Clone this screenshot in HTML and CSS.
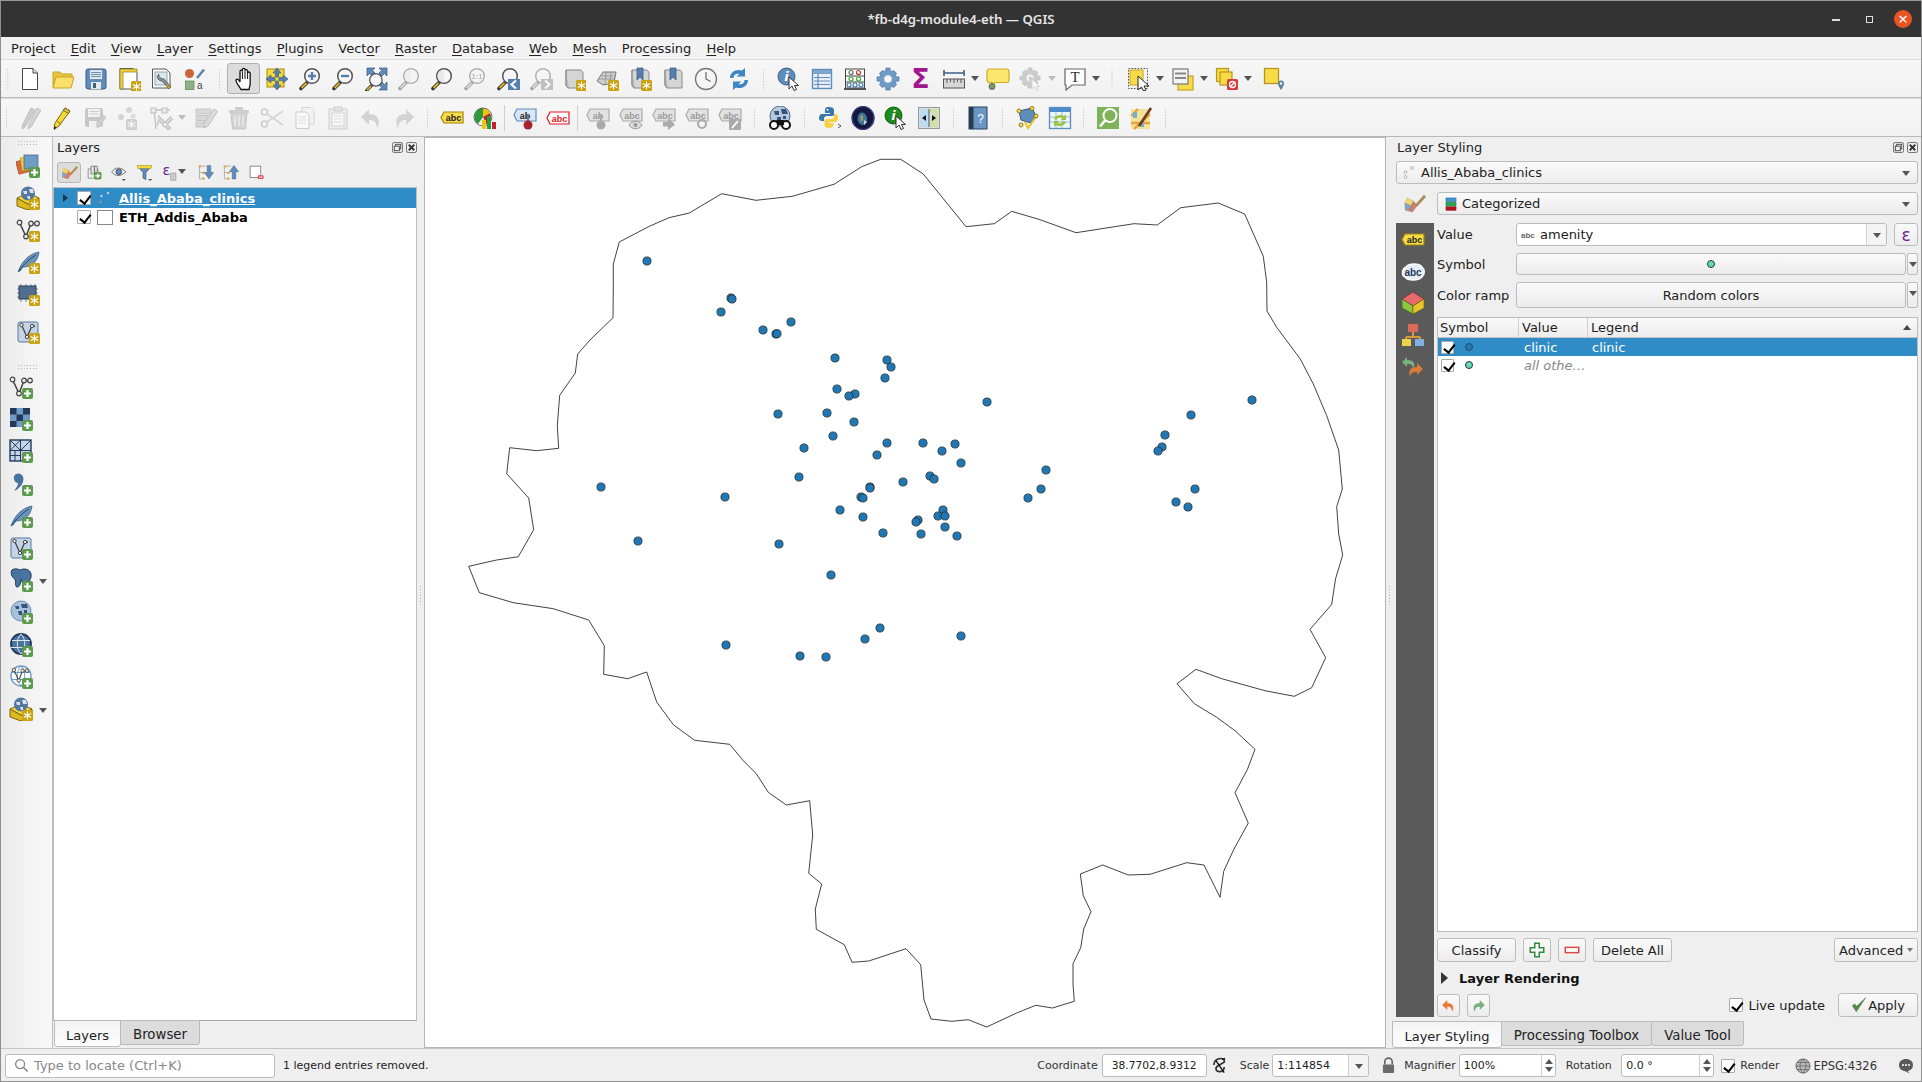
FILE: index.html
```html
<!DOCTYPE html>
<html lang="en">
<head>
<meta charset="utf-8">
<title>*fb-d4g-module4-eth — QGIS</title>
<link rel="stylesheet" href="styles.css">
</head>
<body>
<svg class="sprite" aria-hidden="true">
<defs>
<g id="bplus"><rect x="13" y="13" width="11" height="11" rx="2" fill="#5c9a4e"/><path d="M18.5 15v7M15 18.5h7" stroke="#fff" stroke-width="2.2"/></g>
<g id="bstar"><rect x="13" y="13" width="11" height="11" rx="1.5" fill="#c8a20f"/><path d="M18.5 14.5v8M14.8 16.5l7.4 4M14.8 20.5l7.4-4" stroke="#fff" stroke-width="1.2"/></g>
<g id="glass"><path d="M9 15.5 3 21.5" stroke="#333" stroke-width="3.6" stroke-linecap="round"/><path d="M8.5 16 3.5 21" stroke="#e0b52a" stroke-width="1.8"/><circle cx="14" cy="9" r="7.3" fill="#f6f6f6" stroke="#555" stroke-width="1.5"/></g>
<g id="vnode"><path d="M3.5 4.5 10 18.5 15 5.5H21" fill="none" stroke="#444" stroke-width="1.5"/><circle cx="3.5" cy="4.5" r="2.3" fill="#eee" stroke="#444" stroke-width="1.2"/><circle cx="10" cy="18.5" r="2.3" fill="#eee" stroke="#444" stroke-width="1.2"/><circle cx="15" cy="5.5" r="2.3" fill="#eee" stroke="#444" stroke-width="1.2"/><circle cx="21" cy="5.5" r="2.3" fill="#eee" stroke="#444" stroke-width="1.2"/></g>
<g id="feather"><path d="M2 22C5 13 12 4 23 2 22 11 16 17 7 17L4 21Z" fill="#6d93bd" stroke="#3b5f88" stroke-width=".8"/><path d="M3 21C8 14 13 9 20 5" stroke="#27496d" fill="none"/></g>
<g id="vbox"><rect x="2" y="2" width="20" height="20" rx="2" fill="#c4d4e6" stroke="#58789c"/><path d="M5.5 5 11 17 16 6H19" fill="none" stroke="#444" stroke-width="1.3"/><circle cx="5.5" cy="5" r="1.7" fill="#eee" stroke="#444"/><circle cx="11" cy="17" r="1.7" fill="#eee" stroke="#444"/><circle cx="16" cy="6" r="1.7" fill="#eee" stroke="#444"/></g>
<g id="gbox"><path d="M1 12 12 18 23 12V20L12 24 1 20Z" fill="#dcb91e" stroke="#7a6510"/><path d="M1 12 12 7 23 12 12 18Z" fill="#f0d43a" stroke="#7a6510"/><circle cx="12" cy="7.5" r="7" fill="#53779f"/><path d="M7 5h4v3H8zM13 3h4l1 4h-4zM11 10h3v3h-2z" fill="#d6e1ec"/></g>
<g id="globeL"><circle cx="12" cy="11" r="10" fill="#a9c1da" stroke="#6d8fb3"/><path d="M6 6h4v3H7zM12 4h6l1 4h-6zM9 11h4v4h-3zM15 10h3v3h-3z" fill="#34567c"/></g>
<g id="scroll"><path d="M4 3H18C20 3 21 5 21 7V21H7C5 21 4 19 4 17Z" fill="#d5d5d5" stroke="#888"/><path d="M4 3V17C4 19 5 21 7 21" fill="#bbb" stroke="#888"/></g>
<g id="bookm"><path d="M9 1H15V13L12 10 9 13Z" fill="#5580ad" stroke="#37587c" stroke-width=".7"/></g>

<symbol id="i-new" viewBox="0 0 24 24"><path d="M4.5 1.5H15L19.5 6V22.5H4.5Z" fill="#fff" stroke="#444"/><path d="M15 1.5V6H19.5" fill="#ddd" stroke="#444"/></symbol>
<symbol id="i-open" viewBox="0 0 24 24"><path d="M2 20V5H9L11 7H21V10" fill="#e8c53c" stroke="#c7a325"/><path d="M2 21 5 10H23L20 21Z" fill="#fbe06b" stroke="#c7a325"/></symbol>
<symbol id="i-save" viewBox="0 0 24 24"><rect x="2" y="2" width="20" height="20" rx="2" fill="#5f8dbb" stroke="#3d5f85"/><rect x="6" y="3" width="12" height="9" fill="#dfe7ef"/><path d="M7 5.5H17M7 7.5H17M7 9.5H17" stroke="#7a8fa6"/><rect x="7" y="15" width="10" height="7" fill="#e8e8e8"/><rect x="9" y="16" width="3" height="5" fill="#3d5f85"/></symbol>
<symbol id="i-layout" viewBox="0 0 24 24"><path d="M3 1.5H16L20 5.5V22H3Z" fill="#fff" stroke="#555"/><path d="M3 2H20V5H6V22H3Z" fill="#f3cf3e" stroke="#8d7a1f" stroke-width=".7"/><use href="#bstar" transform="translate(1 1)"/></symbol>
<symbol id="i-lmgr" viewBox="0 0 24 24"><path d="M2.5 2H16L20 6V21H2.5Z" fill="#fff" stroke="#555"/><rect x="5" y="5" width="12" height="13" fill="#dbe6f1" stroke="#8aa"/><path d="M9 7 C8 10 11 12 14 12L21 20 19 22 12 14C9 14 6 11 8 8Z" fill="#8e8e8e" stroke="#444" stroke-width=".7"/><path d="M17 18l3 3" stroke="#c8a20f" stroke-width="2.2"/></symbol>
<symbol id="i-style" viewBox="0 0 24 24"><circle cx="6.5" cy="6.5" r="4.5" fill="#c9633a"/><path d="M14 11 21 2.5" stroke="#5c86b0" stroke-width="2.6"/><rect x="2.5" y="14" width="8.5" height="8.5" fill="#8cb184" stroke="#5c8055" stroke-width=".7"/><text x="14" y="22" class="svgt" font-size="10" fill="#444">a</text></symbol>
<symbol id="i-hand" viewBox="0 0 24 24"><path d="M8 22.5C6 19 2.5 15 3 13 4 11.5 6 12.5 7 15V4.5C7 2.7 9.4 2.7 9.4 4.5V2.8C9.4 1 12 1 12 2.8V3.6C12 2 14.6 2.2 14.6 4V6C14.6 4.5 17.2 4.7 17.2 6.5V15.5C17.2 18.5 16.4 20.5 16 22.5Z" fill="#fff" stroke="#111" stroke-width="1.3"/><path d="M9.4 4.5V12M12 3.6V12M14.6 6V12" stroke="#111" fill="none"/></symbol>
<symbol id="i-pansel" viewBox="0 0 24 24"><rect x="2" y="2" width="17" height="18" fill="#f4d93c" stroke="#a68b12"/><path d="M12 1 16 6H13.5V10H10.5V6H8ZM12 23 8 18H10.5V14H13.5V18H16ZM1 12 6 8V10.5H10V13.5H6V16ZM23 12 18 16V13.5H14V10.5H18V8Z" fill="#5580ad" stroke="#37587c" stroke-width=".6"/></symbol>
<symbol id="i-zin" viewBox="0 0 24 24"><use href="#glass"/><path d="M14 5V13M10 9H18" stroke="#5580ad" stroke-width="2.4"/></symbol>
<symbol id="i-zout" viewBox="0 0 24 24"><use href="#glass"/><path d="M10 9H18" stroke="#5580ad" stroke-width="2.4"/></symbol>
<symbol id="i-zfull" viewBox="0 0 24 24"><path d="M3 1H11L8.5 3.5 11 6 8 9 5.5 6.5 3 9ZM23 1V9L20.5 6.5 18 9 15 6 17.5 3.5 15 1ZM23 23H15L17.5 20.5 15 18 18 15 20.5 17.5 23 15Z" fill="#5f8dbb" stroke="#37587c" stroke-width=".7"/><use href="#glass" transform="translate(0 1) scale(.85) translate(0 5)"/></symbol>
<symbol id="i-zsel" viewBox="0 0 24 24"><use href="#glass"/><path d="M14 2.5a6.5 6.5 0 0 0 0 13Z" fill="#e8e8e8"/></symbol>
<symbol id="i-z11" viewBox="0 0 24 24"><use href="#glass"/><text x="14" y="12" text-anchor="middle" class="svgt" font-size="7.5" font-weight="700" fill="#666">1:1</text></symbol>
<symbol id="i-zlast" viewBox="0 0 24 24"><use href="#glass"/><rect x="12" y="12" width="12" height="11" fill="#5580ad"/><path d="M20 13.5 15.5 17.5 20 21.5" fill="none" stroke="#fff" stroke-width="2.2"/></symbol>
<symbol id="i-znext" viewBox="0 0 24 24"><use href="#glass"/><rect x="12" y="12" width="12" height="11" fill="#5580ad"/><path d="M16 13.5 20.5 17.5 16 21.5" fill="none" stroke="#fff" stroke-width="2.2"/></symbol>
<symbol id="i-newmap" viewBox="0 0 24 24"><use href="#scroll"/><use href="#bstar" transform="translate(1 0)"/></symbol>
<symbol id="i-3d" viewBox="0 0 24 24"><path d="M2 14 8 5H21L19 16 8 18Z" fill="#cfcfcf" stroke="#777"/><path d="M6 9 20 9M4 12 20 12M11 5 10 18M16 5 15 17" stroke="#888" stroke-width=".7"/><use href="#bstar"/></symbol>
<symbol id="i-newbk" viewBox="0 0 24 24"><use href="#scroll"/><use href="#bookm"/><use href="#bstar"/></symbol>
<symbol id="i-bk" viewBox="0 0 24 24"><use href="#scroll"/><use href="#bookm"/></symbol>
<symbol id="i-clock" viewBox="0 0 24 24"><circle cx="12" cy="12" r="10.5" fill="#f5f5f5" stroke="#777" stroke-width="1.3"/><path d="M12 5V12L16.5 14.5" stroke="#666" stroke-width="1.2" fill="none"/></symbol>
<symbol id="i-refresh" viewBox="0 0 24 24"><path d="M3 11C3 5 9 1.5 15 3.5L18 1V9.5H9.5L12.5 7C9 6 6.5 8 6.5 11Z" fill="#3f86c6"/><path d="M21 13C21 19 15 22.5 9 20.5L6 23V14.5H14.5L11.5 17C15 18 17.5 16 17.5 13Z" fill="#3f86c6"/></symbol>
<symbol id="i-ident" viewBox="0 0 24 24"><circle cx="9.5" cy="9.5" r="8.5" fill="#5f8dbb" stroke="#3d5f85"/><text x="9.5" y="14" text-anchor="middle" class="svgs" font-size="13" font-style="italic" font-weight="700" fill="#fff">i</text><path d="M12 10V22L15 19 17 23.5 19.5 22.5 17.5 18.5H21.5Z" fill="#fff" stroke="#333"/></symbol>
<symbol id="i-table" viewBox="0 0 24 24"><rect x="2.5" y="2.5" width="19" height="19" fill="#e8eff7" stroke="#5f8dbb" stroke-width="1.4"/><rect x="3" y="3" width="18" height="4" fill="#7ba5cf"/><path d="M8 7V21M4 10.5H20M4 14H20M4 17.5H20" stroke="#5f8dbb" stroke-width="1.2"/></symbol>
<symbol id="i-abacus" viewBox="0 0 24 24"><rect x="2.5" y="2" width="19" height="19" fill="#fff" stroke="#444"/><path d="M2 9H22M2 15H22" stroke="#444"/><rect x="1" y="21" width="22" height="2" fill="#555"/><g fill="none" stroke-width="1.2"><circle cx="8" cy="5.5" r="2" stroke="#666"/><circle cx="15.5" cy="5.5" r="2" stroke="#b33"/><circle cx="8" cy="12" r="2" stroke="#3a3"/><circle cx="15.5" cy="12" r="2" stroke="#3a3"/><circle cx="6" cy="18" r="2" stroke="#47a"/><circle cx="12" cy="18" r="2" stroke="#47a"/><circle cx="18" cy="18" r="2" stroke="#47a"/></g></symbol>
<symbol id="i-gear" viewBox="0 0 24 24"><path d="M10 1H14L14.6 5 17.7 3.5 20.5 6.3 19 9.4 23 10V14L19 14.6 20.5 17.7 17.7 20.5 14.6 19 14 23H10L9.4 19 6.3 20.5 3.5 17.7 5 14.6 1 14V10L5 9.4 3.5 6.3 6.3 3.5 9.4 5Z" fill="#6f9bc7" stroke="#4e78a3" stroke-width=".7"/><circle cx="12" cy="12" r="3.8" fill="#f5f5f5"/></symbol>
<symbol id="i-measure" viewBox="0 0 24 24"><path d="M2 6H22M2 3V9M22 3V9" stroke="#3d5f85" stroke-width="1.6"/><rect x="1.5" y="12" width="21" height="9" fill="#d6d6d6" stroke="#555"/><path d="M5 12V16M8.5 12V15M12 12V16M15.5 12V15M19 12V16" stroke="#555"/></symbol>
<symbol id="i-tip" viewBox="0 0 24 24"><path d="M3.5 2H20.5C22 2 23 3 23 4.5V13C23 14.5 22 15.5 20.5 15.5H9L6 19V15.5H3.5C2 15.5 1 14.5 1 13V4.5C1 3 2 2 3.5 2Z" fill="#fde66f" stroke="#d1ae26" stroke-width="1.2"/><circle cx="6" cy="19.5" r="3" fill="#7a9a6a" stroke="#566f49"/></symbol>
<symbol id="i-gearg" viewBox="0 0 24 24"><use href="#i-gear" width="22" height="22"/><path d="M10 9 16 12 10 15Z" fill="#999"/><path d="M13 12V22L15.5 20 17.5 23.5 19 22.5 17.5 19.5H20.5Z" fill="#fff" stroke="#aaa"/></symbol>
<symbol id="i-textann" viewBox="0 0 24 24"><path d="M2 2H22V18H9L3 23V18H2Z" fill="#fff" stroke="#666" stroke-width="1.2"/><text x="12" y="15" text-anchor="middle" class="svgr" font-size="15" fill="#333">T</text></symbol>
<symbol id="i-select" viewBox="0 0 24 24"><rect x="1.5" y="1.5" width="19" height="20" fill="none" stroke="#555" stroke-dasharray="1.6 1.4"/><rect x="3" y="3" width="13" height="15" fill="#f7dc47" stroke="#c7a325"/><path d="M11 9V23L14.5 20 16.5 24 19 23 17 19H22Z" fill="#fff" stroke="#222"/></symbol>
<symbol id="i-form" viewBox="0 0 24 24"><rect x="7" y="9" width="15" height="14" fill="#f7dc47" stroke="#c7a325" stroke-width="1.2"/><rect x="2" y="2" width="15" height="15" fill="#f4f4f4" stroke="#777" stroke-width="1.2"/><path d="M4 6.5H15M4 11H15" stroke="#888" stroke-width="2.2"/></symbol>
<symbol id="i-desel" viewBox="0 0 24 24"><rect x="1.5" y="1.5" width="12" height="13" fill="#f7dc47" stroke="#b8961c" stroke-width="1.2"/><rect x="5" y="5" width="12" height="13" fill="#f7dc47" stroke="#b8961c" stroke-width="1.2"/><rect x="12" y="12" width="11" height="11" rx="1.5" fill="#d73a3a"/><circle cx="17.5" cy="17.5" r="3" fill="none" stroke="#fff" stroke-width="1.3"/><path d="M15.5 19.5l4-4" stroke="#fff" stroke-width="1.3"/></symbol>
<symbol id="i-pin" viewBox="0 0 24 24"><rect x="1.5" y="1.5" width="14" height="15" fill="#f7dc47" stroke="#b8961c" stroke-width="1.3"/><path d="M18 23C15.5 19 15 18 15 16.5A3 3 0 0 1 21 16.5C21 18 20.5 19 18 23Z" fill="#5f7fa0"/><circle cx="18" cy="16.5" r="1.2" fill="#fff"/></symbol>

<symbol id="i-toggle" viewBox="0 0 24 24"><path d="M8 21 5 23 5.5 19 14 2 18 4Z" fill="#999" stroke="#777"/><path d="M14 21 11 23 11.5 19 20 2 24 4Z" fill="#aaa" stroke="#777"/></symbol>
<symbol id="i-pencil" viewBox="0 0 24 24"><path d="M9 20 4 23.5 4.7 17.5 15 2 20 5Z" fill="#f4d93c" stroke="#7a6510"/><path d="M15 2 20 5 18.5 7.5 13.4 4.4Z" fill="#d9c35a" stroke="#7a6510"/><path d="M7.5 15.5 11 18" stroke="#7a6510"/><path d="M4.4 20 6.5 21.6 4 23.5Z" fill="#222"/></symbol>
<symbol id="i-saveed" viewBox="0 0 24 24"><rect x="2" y="2" width="18" height="19" rx="2" fill="#8a8a8a"/><rect x="5" y="3" width="12" height="8" fill="#eee"/><path d="M6 5.5H16M6 8H16" stroke="#999"/><rect x="6" y="15" width="8" height="6" fill="#eee"/><path d="M14 22 13.5 17 20 9 23 11 17 20Z" fill="#999" stroke="#777" stroke-width=".6"/></symbol>
<symbol id="i-addpts" viewBox="0 0 24 24"><circle cx="5" cy="11" r="3" fill="#aaa"/><circle cx="13" cy="4" r="3" fill="#aaa"/><circle cx="17" cy="10" r="2.6" fill="#bbb"/><use href="#bstar" transform="translate(-3 0)"/></symbol>
<symbol id="i-vertex" viewBox="0 0 24 24"><path d="M4 4H21M5 4 7 23" stroke="#777" fill="none" stroke-width="1.3"/><rect x="2" y="2" width="5" height="5" fill="#ddd" stroke="#777"/><rect x="13" y="2" width="5" height="5" fill="#ddd" stroke="#777"/><path d="M9 9 22 22 19 24 10 15 8 20 M22 10 13 19 16 21 24 13" fill="#aaa" stroke="#777"/></symbol>
<symbol id="i-modify" viewBox="0 0 24 24"><path d="M2 3H17V8H2ZM2 9.5H14V14.5H2ZM2 16H12V21H2Z" fill="#b0b0b0" stroke="#888"/><path d="M10 22 10 17 20 3 23.5 5.5 14 20Z" fill="#bbb" stroke="#777"/></symbol>
<symbol id="i-trash" viewBox="0 0 24 24"><path d="M4 7H20L18.5 23H5.5Z" fill="#aaa" stroke="#888"/><path d="M2 4H22V7H2ZM8 1H16V4H8Z" fill="#999"/><path d="M8 10V20M12 10V20M16 10V20" stroke="#eee" stroke-width="1.2"/></symbol>
<symbol id="i-cut" viewBox="0 0 24 24"><circle cx="4.5" cy="6" r="3" fill="none" stroke="#999" stroke-width="1.6"/><circle cx="4.5" cy="18" r="3" fill="none" stroke="#999" stroke-width="1.6"/><path d="M7 8 23 19M7 16 23 5" stroke="#aaa" stroke-width="1.8"/></symbol>
<symbol id="i-copy" viewBox="0 0 24 24"><path d="M9 1.5H18L21 4.5V18H9Z" fill="#f2f2f2" stroke="#aaa"/><path d="M3 6H13L16 9V22.5H3Z" fill="#fff" stroke="#999"/><path d="M5.5 11H13M5.5 14H13M5.5 17H13" stroke="#bbb"/></symbol>
<symbol id="i-paste" viewBox="0 0 24 24"><rect x="3" y="3" width="18" height="20" fill="#e4e4e4" stroke="#999"/><rect x="8" y="1" width="8" height="4" fill="#ccc" stroke="#999"/><rect x="6" y="7" width="12" height="13" fill="#fff" stroke="#aaa"/><path d="M8 10H16M8 13H16M8 16H16" stroke="#bbb"/></symbol>
<symbol id="i-undo" viewBox="0 0 24 24"><path d="M10 3 2 11 10 19V14C15 14 17 16 18 22 22 14 19 8 10 8Z" fill="#a8a8a8"/></symbol>
<symbol id="i-redo" viewBox="0 0 24 24"><path d="M14 3 22 11 14 19V14C9 14 7 16 6 22 2 14 5 8 14 8Z" fill="#a8a8a8"/></symbol>
<symbol id="i-abc" viewBox="0 0 24 24"><path d="M4 6H23V17H4L1 11.5Z" fill="#f7dc47" stroke="#a08410" stroke-width="1.2"/><text x="13.5" y="15" text-anchor="middle" class="svgt" font-size="9" font-weight="700" fill="#222">abc</text></symbol>
<symbol id="i-chart" viewBox="0 0 24 24"><path d="M10 2A9 9 0 0 0 5 18L10 11Z" fill="#2d9a3a"/><path d="M10 2A9 9 0 0 1 17 7L10 11Z" fill="#f1c40f"/><path d="M17 7A9 9 0 0 1 14 19L10 11Z" fill="#c0212a"/><circle cx="10" cy="11" r="9" fill="none" stroke="#333" stroke-width=".7"/><rect x="9" y="14" width="4" height="9" fill="#f1c40f"/><rect x="14" y="10" width="4" height="13" fill="#2d9a3a"/><rect x="19" y="16" width="4" height="7" fill="#c0212a"/></symbol>
<symbol id="i-abcblue" viewBox="0 0 24 24"><path d="M4 3H23V15H4L1 9Z" fill="#d8e6f6" stroke="#5f8dbb" stroke-width="1.2"/><text x="12" y="12.5" text-anchor="middle" class="svgt" font-size="9" font-weight="700" fill="#222">ab</text><path d="M15 8V15" stroke="#777" stroke-width="2"/><circle cx="15" cy="19" r="4.5" fill="#a8232e"/></symbol>
<symbol id="i-abcred" viewBox="0 0 24 24"><path d="M4 6H23V18H4L1 12Z" fill="#fff" stroke="#e01b24" stroke-width="1.2"/><text x="13.5" y="15.5" text-anchor="middle" class="svgt" font-size="9" font-weight="700" fill="#e01b24">abc</text></symbol>
<symbol id="i-abcpin" viewBox="0 0 24 24"><path d="M4 3H23V15H4L1 9Z" fill="#e2e2e2" stroke="#aaa" stroke-width="1.2"/><text x="12" y="12.5" text-anchor="middle" class="svgt" font-size="9" font-weight="700" fill="#999">ab</text><path d="M15 8V15" stroke="#aaa" stroke-width="2"/><circle cx="15" cy="19" r="4.5" fill="#aaa"/></symbol>
<symbol id="i-abceye" viewBox="0 0 24 24"><path d="M4 3H23V15H4L1 9Z" fill="#e2e2e2" stroke="#aaa" stroke-width="1.2"/><text x="13" y="12.5" text-anchor="middle" class="svgt" font-size="9" font-weight="700" fill="#999">abc</text><path d="M10 19C13 14 20 14 23 19 20 24 13 24 10 19Z" fill="#ddd" stroke="#999"/><circle cx="16.5" cy="19" r="2" fill="#999"/></symbol>
<symbol id="i-abcmove" viewBox="0 0 24 24"><path d="M4 3H23V15H4L1 9Z" fill="#e2e2e2" stroke="#aaa" stroke-width="1.2"/><text x="13" y="12.5" text-anchor="middle" class="svgt" font-size="9" font-weight="700" fill="#999">abc</text><path d="M11 16H16V12L23 18.5 16 24V20.5H11Z" fill="#aaa"/></symbol>
<symbol id="i-abcrot" viewBox="0 0 24 24"><path d="M4 3H23V15H4L1 9Z" fill="#e2e2e2" stroke="#aaa" stroke-width="1.2"/><text x="13" y="12.5" text-anchor="middle" class="svgt" font-size="9" font-weight="700" fill="#999">abc</text><circle cx="17" cy="18" r="4" fill="none" stroke="#aaa" stroke-width="2"/></symbol>
<symbol id="i-abcedit" viewBox="0 0 24 24"><path d="M4 3H23V15H4L1 9Z" fill="#e2e2e2" stroke="#aaa" stroke-width="1.2"/><text x="13" y="12.5" text-anchor="middle" class="svgt" font-size="9" font-weight="700" fill="#999">abc</text><rect x="11" y="13" width="12" height="11" rx="1" fill="#aaa"/><path d="M14 22 20 15" stroke="#fff" stroke-width="1.8"/></symbol>
<symbol id="i-binoc" viewBox="0 0 24 24"><circle cx="12" cy="10" r="10" fill="#b8c9dc" stroke="#48698f"/><path d="M6 5h5v4H7zM13 3h5l2 5h-6zM9 11h4v4H9zM15 10h3v3h-3z" fill="#34567c"/><circle cx="6" cy="19" r="4" fill="#fff" stroke="#111" stroke-width="2"/><circle cx="18" cy="19" r="4" fill="#fff" stroke="#111" stroke-width="2"/><path d="M8 14H16V19H10Z" fill="#111"/></symbol>
<symbol id="i-python" viewBox="0 0 24 24"><path d="M11 1C7 1 7 3 7 5V7H12V8H4C2 8 1 10 1 12S2 15 4 15H6V13C6 11 7 10 9 10H14C15.5 10 16 9 16 8V4C16 2 14 1 11 1Z" fill="#3a76a8"/><circle cx="9.5" cy="3.7" r="1" fill="#fff"/><path d="M16 8V10C16 12 15 13 13 13H8C7 13 6.5 14 6.5 15V19C6.5 21 8.5 22 11 22S15.5 21 15.5 19V17H11V16H17C19 16 20 14 20 12S19 8 17 8Z" fill="#f7cf45"/><path d="M20 18 23 20 20 22" fill="none" stroke="#555"/></symbol>
<symbol id="i-earth" viewBox="0 0 24 24"><ellipse cx="12" cy="12" rx="11" ry="11.5" fill="#14183e" stroke="#34407e" stroke-width="1.4"/><path d="M8 8C11 5 15 7 16 12 17 17 13 21 9 18 7 16 5 13 8 8Z" fill="#3e7699"/><path d="M9 10 12 9 12 14 10 16Z" fill="#a99761"/><path d="M13 14 16 16 13 19Z" fill="#c9d4dc"/></symbol>
<symbol id="i-identg" viewBox="0 0 24 24"><circle cx="9.5" cy="9.5" r="8.5" fill="#1c8a1c" stroke="#0d5f0d"/><text x="9.5" y="14" text-anchor="middle" class="svgs" font-size="13" font-style="italic" font-weight="700" fill="#fff">i</text><path d="M12 10V22L15 19 17 23.5 19.5 22.5 17.5 18.5H21.5Z" fill="#fff" stroke="#333"/></symbol>
<symbol id="i-swipe" viewBox="0 0 24 24"><rect x="1.5" y="1.5" width="21" height="21" fill="#ddd" stroke="#999"/><rect x="3" y="3" width="9" height="18" fill="#bcdcf2"/><path d="M12 3H21V21H12V16L17 8 12 6Z" fill="#cde0a8"/><path d="M12 3V21" stroke="#555"/><path d="M5 12 9 9V15ZM19 12 15 9V15Z" fill="#111"/></symbol>
<symbol id="i-help" viewBox="0 0 24 24"><rect x="3" y="1" width="18" height="22" fill="#6b96c4" stroke="#27415e"/><rect x="3" y="1" width="4.5" height="22" fill="#293b4e"/><text x="14.5" y="17" text-anchor="middle" class="svgt" font-size="12" fill="#fff">?</text></symbol>
<symbol id="i-dig" viewBox="0 0 24 24"><path d="M4 5 17 2 21 10 16 17 6 14Z" fill="#5f8dbb" stroke="#37587c"/><path d="M10 16 13 22 21 11" stroke="#e6c52a" stroke-width="2" fill="none"/><g fill="#f7dc47" stroke="#7a6510" stroke-width=".8"><circle cx="4" cy="5" r="2"/><circle cx="17" cy="2.4" r="2"/><circle cx="21" cy="10" r="2"/><circle cx="6" cy="19" r="2"/></g></symbol>
<symbol id="i-tabref" viewBox="0 0 24 24"><rect x="1.5" y="1.5" width="21" height="21" fill="#eef5fb" stroke="#5f8dbb" stroke-width="1.3"/><rect x="2" y="2" width="20" height="4" fill="#4a8cc9"/><path d="M8 6V22M14 6V22M2 11H22M2 16H22" stroke="#9cc0e0"/><path d="M6 13C7 9 13 8 16 10L18 8.5V14H12.5L14.5 12.3C12.5 11 9.5 11.5 8.7 14ZM18 16C17 20 11 21 8 19L6 20.5V15H11.5L9.5 16.7C11.5 18 14.5 17.5 15.3 15Z" fill="#9bc53d"/></symbol>
<symbol id="i-gsearch" viewBox="0 0 24 24"><rect x="1" y="1" width="22" height="22" fill="#7fb35a"/><circle cx="14" cy="9.5" r="6.5" fill="none" stroke="#fff" stroke-width="2"/><path d="M9.5 14 4 20.5" stroke="#fff" stroke-width="2.6"/></symbol>
<symbol id="i-mapedit" viewBox="0 0 24 24"><rect x="2" y="3" width="19" height="20" fill="#f2e29a"/><path d="M2 10 9 3M5 23 21 8M2 17H21" stroke="#e6a43b" stroke-width="2.4"/><path d="M4 6H8V12H4ZM11 15H15V21H11Z" fill="#74b0d6"/><path d="M10 20 22 2" stroke="#6a3b1f" stroke-width="2.6"/></symbol>

<symbol id="i-dsm" viewBox="0 0 24 24"><rect x="1" y="6" width="13" height="13" transform="rotate(-15 7 12)" fill="#d7693a" stroke="#9a4422" stroke-width=".6"/><rect x="5" y="3" width="13" height="13" transform="rotate(-8 11 9)" fill="#f3cf3e" stroke="#a68b12" stroke-width=".6"/><rect x="8" y="1" width="14" height="14" fill="#6f9bc7" stroke="#3d5f85" stroke-width=".7"/><use href="#bplus"/></symbol>
<symbol id="i-gpkg" viewBox="0 0 24 24"><use href="#gbox"/><use href="#bstar"/></symbol>
<symbol id="i-vstar" viewBox="0 0 24 24"><use href="#vnode"/><use href="#bstar"/></symbol>
<symbol id="i-fstar" viewBox="0 0 24 24"><use href="#feather"/><use href="#bstar"/></symbol>
<symbol id="i-chip" viewBox="0 0 24 24"><path d="M1 7H22M1 11H22M1 15H22M5 2V20M10 2V20M15 2V20M19 2V20" stroke="#888"/><rect x="3" y="4" width="17" height="13" fill="#4f6d8f" stroke="#2c4158"/><use href="#bstar"/></symbol>
<symbol id="i-vboxs" viewBox="0 0 24 24"><use href="#vbox"/><use href="#bstar"/></symbol>
<symbol id="i-vplus" viewBox="0 0 24 24"><use href="#vnode"/><use href="#bplus"/></symbol>
<symbol id="i-rplus" viewBox="0 0 24 24"><path d="M1 1H21V20H1Z" fill="#6f9bc7"/><path d="M1 1H7.5V7.5H1ZM14 1H21V7.5H14ZM7.5 7.5H14V14H7.5ZM1 14H7.5V20H1Z" fill="#22395a"/><use href="#bplus"/></symbol>
<symbol id="i-mplus" viewBox="0 0 24 24"><rect x="1" y="1" width="21" height="21" fill="#c4d4e6" stroke="#22395a" stroke-width="1.4"/><path d="M1 11.5H22M11.5 1V22M1 1 11.5 11.5M1 11.5 11.5 1M22 1 11.5 11.5M1 16.5H11.5M6 11.5V22" stroke="#22395a"/><use href="#bplus"/></symbol>
<symbol id="i-cplus" viewBox="0 0 24 24"><path d="M7 2C12 0 16 4 14 10 12 15 8 18 5 19 8 15 9 13 9 11 5 11 3 4 7 2Z" fill="#4a74a0"/><use href="#bplus"/></symbol>
<symbol id="i-fplus" viewBox="0 0 24 24"><use href="#feather"/><use href="#bplus"/></symbol>
<symbol id="i-vbplus" viewBox="0 0 24 24"><use href="#vbox"/><use href="#bplus"/></symbol>
<symbol id="i-pg" viewBox="0 0 24 24"><path d="M3 2C6 0 9 1 11 2 15 0 21 1 22 6 23 10 20 13 19 15 18 18 16 18 14 16 13 15 13 12 12 11 12 15 11 19 8 19 6 19 7 14 6 11 3 10 1 4 3 2Z" fill="#4a74a0" stroke="#22395a"/><use href="#bplus"/></symbol>
<symbol id="i-wms" viewBox="0 0 24 24"><use href="#globeL"/><use href="#bplus"/></symbol>
<symbol id="i-wcs" viewBox="0 0 24 24"><circle cx="12" cy="11" r="10" fill="#4a74a0" stroke="#22395a" stroke-width="1.8"/><path d="M3 7.5H21M2 14.5H22M12 1C7 6 7 16 12 21M12 1C17 6 17 16 12 21" stroke="#dde6f0" fill="none"/><use href="#bplus"/></symbol>
<symbol id="i-wfs" viewBox="0 0 24 24"><circle cx="12" cy="11" r="10" fill="#fff" stroke="#6f9bc7" stroke-width="1.4"/><path d="M3 7.5H21M2 14.5H22M12 1C7 6 7 16 12 21M12 1C17 6 17 16 12 21" stroke="#6f9bc7" fill="none"/><use href="#vnode" transform="scale(.75) translate(3 2)"/><use href="#bplus"/></symbol>

<symbol id="i-brush" viewBox="0 0 24 24"><path d="M13 15 23 4" stroke="#b98a4a" stroke-width="3"/><path d="M4 6 11 9 15 14 10 21 2 19Z" fill="#d97a63"/><path d="M4 6 11 9 8 14 1.5 11Z" fill="#f0d84a"/><path d="M1.5 11 8 14 6 19 2 18Z" fill="#7ba5cf"/></symbol>
<symbol id="i-group" viewBox="0 0 24 24"><path d="M3 7V20H17V7Z" fill="#eee" stroke="#777"/><path d="M7 3H12V14H7ZM12 3H16V14H12Z" fill="#ddd" stroke="#666"/><use href="#bplus" transform="translate(-1 -1) scale(.95)"/></symbol>
<symbol id="i-eye" viewBox="0 0 24 24"><path d="M1 11C6 4 14 4 21 11 14 18 6 18 1 11Z" fill="#eee" stroke="#666" stroke-width="1.2"/><circle cx="11" cy="11" r="4" fill="#5f8dbb" stroke="#333"/><path d="M15 21H21L18 24Z" fill="#555"/></symbol>
<symbol id="i-filter" viewBox="0 0 24 24"><path d="M2 3H22L14 12V22L10 20V12Z" fill="#5f8dbb" stroke="#37587c"/><rect x="2" y="2" width="20" height="4" fill="#f4d93c" stroke="#a68b12" stroke-width=".6"/><path d="M17 21H23L20 24Z" fill="#555"/></symbol>
<symbol id="i-expr" viewBox="0 0 24 24"><text x="2" y="15" class="svgs" font-size="20" fill="#6e2b87">ε</text><path d="M13 13H21V23H14Z" fill="#ccc" stroke="#999"/></symbol>
<symbol id="i-expand" viewBox="0 0 24 24"><path d="M2 3H11M2 3V21M2 12H9M2 21H9" stroke="#999" fill="none"/><rect x="1" y="2" width="3" height="3" fill="#e8a33b"/><rect x="6" y="11" width="3" height="3" fill="#e8a33b"/><rect x="6" y="19" width="3" height="3" fill="#e8a33b"/><path d="M13 2H18V12H22L15.5 21 9 12H13Z" fill="#5f8dbb" stroke="#37587c" stroke-width=".6"/></symbol>
<symbol id="i-collapse" viewBox="0 0 24 24"><path d="M2 3H11M2 3V21M2 12H9M2 21H9" stroke="#999" fill="none"/><rect x="1" y="2" width="3" height="3" fill="#e8a33b"/><rect x="6" y="11" width="3" height="3" fill="#e8a33b"/><rect x="6" y="19" width="3" height="3" fill="#e8a33b"/><path d="M13 21H18V11H22L15.5 2 9 11H13Z" fill="#5f8dbb" stroke="#37587c" stroke-width=".6"/></symbol>
<symbol id="i-rmlayer" viewBox="0 0 24 24"><rect x="3" y="3" width="15" height="16" fill="#fff" stroke="#666"/><rect x="14" y="16" width="8" height="5" rx="1" fill="#e04848"/><path d="M15.5 18.5H20.5" stroke="#fff" stroke-width="1.4"/></symbol>
<symbol id="i-abcb" viewBox="0 0 24 24"><path d="M5 7C8 3 18 3 21 7 24 9 24 15 21 17 17 21 7 21 4 17 0 15 1 9 5 7Z" fill="#e6edf6" stroke="#fff" stroke-width="1.4"/><text x="12" y="15.5" text-anchor="middle" class="svgt" font-size="10" font-weight="700" fill="#22395a">abc</text></symbol>
<symbol id="i-cube" viewBox="0 0 24 24"><path d="M12 1 23 8 12 15 1 8Z" fill="#e86a6a" stroke="#5b2020" stroke-width=".6"/><path d="M1 8 12 15V23L1 17Z" fill="#8cc63f" stroke="#3d5a19" stroke-width=".6"/><path d="M23 8 12 15V23L23 17Z" fill="#e6c52a" stroke="#6a5c12" stroke-width=".6"/></symbol>
<symbol id="i-diagram" viewBox="0 0 24 24"><path d="M12 8V14M5 14H19M5 14V17M19 14V17" stroke="#d99b3a" stroke-width="2" fill="none"/><rect x="7" y="1" width="10" height="8" fill="#d96a5a"/><rect x="1" y="16" width="9" height="7" fill="#ecd24a"/><rect x="14" y="16" width="9" height="7" fill="#7fb1e0"/></symbol>
<symbol id="i-history" viewBox="0 0 24 24"><path d="M6 3 1 8 6 13V10C11 10 12 12 12 15 15 10 13 6 6 6Z" fill="#79b17d"/><path d="M16 9 22 15 16 21V18C11 18 10 19 9 23 7 17 9 13 16 13Z" fill="#d97a3a"/></symbol>
<symbol id="i-plus-o" viewBox="0 0 24 24"><path d="M9 3H15V9H21V15H15V21H9V15H3V9H9Z" fill="#fff" stroke="#2f8a3a" stroke-width="2"/></symbol>
<symbol id="i-minus-o" viewBox="0 0 24 24"><rect x="3" y="8.5" width="18" height="7" fill="#fff" stroke="#e04848" stroke-width="2"/></symbol>
<symbol id="i-undoc" viewBox="0 0 24 24"><path d="M10 3 2 11 10 19V14C15 14 17 16 18 22 22 14 19 8 10 8Z" fill="#e8793a"/></symbol>
<symbol id="i-redoc" viewBox="0 0 24 24"><path d="M14 3 22 11 14 19V14C9 14 7 16 6 22 2 14 5 8 14 8Z" fill="#79b17d"/></symbol>
<symbol id="i-check" viewBox="0 0 24 24"><path d="M2 13 8 22 22 1 8.5 14 5.5 10.5Z" fill="#5a8a4a" stroke="#3d6a30" stroke-width=".7"/></symbol>
<symbol id="i-dock" viewBox="0 0 12 12"><rect x=".5" y=".5" width="11" height="11" rx="2" fill="none" stroke="#666"/><rect x="4" y="2.5" width="5.5" height="5" fill="none" stroke="#444"/><rect x="2.5" y="4.5" width="5.5" height="5" fill="#eee" stroke="#444"/></symbol>
<symbol id="i-close" viewBox="0 0 12 12"><rect x=".5" y=".5" width="11" height="11" rx="2" fill="none" stroke="#666"/><path d="M3 3 9 9M9 3 3 9" stroke="#333" stroke-width="2"/></symbol>
<symbol id="i-pts" viewBox="0 0 14 14"><circle cx="9" cy="2" r="1.2" fill="#ccd"/><circle cx="2.5" cy="5" r="1.2" fill="#ccd"/><circle cx="1.5" cy="11" r="1.2" fill="#99a"/></symbol>
<symbol id="i-ptsd" viewBox="0 0 14 14"><circle cx="9" cy="2" r="1.4" fill="#fff" stroke="#888" stroke-width=".6"/><circle cx="2.5" cy="6" r="1.4" fill="#fff" stroke="#888" stroke-width=".6"/><circle cx="2.5" cy="11" r="1.4" fill="#fff" stroke="#888" stroke-width=".6"/></symbol>
<symbol id="i-cat" viewBox="0 0 14 14"><rect x="2" y="1" width="10" height="3.4" fill="#3b9ad4" stroke="#1c5f8a" stroke-width=".6"/><rect x="2" y="5.4" width="10" height="3.4" fill="#2aa84f" stroke="#177a36" stroke-width=".6"/><rect x="2" y="9.8" width="10" height="3.4" fill="#b4161b" stroke="#7a0c10" stroke-width=".6"/></symbol>
<symbol id="i-lock" viewBox="0 0 14 18"><path d="M3 8V5A4 4 0 0 1 11 5V8" fill="none" stroke="#666" stroke-width="1.8"/><rect x="1" y="8" width="12" height="9" rx="1" fill="#6b6b6b"/></symbol>
<symbol id="i-nomap" viewBox="0 0 16 18"><path d="M2 8C2 4 5 1 9 1 12 1 14 3 13 5L6 9C3 11 4 15 8 15 11 15 13 13 13 10" fill="none" stroke="#333" stroke-width="1.8"/><path d="M4 3 13 16M11 2 14 1" stroke="#111" stroke-width="1.5"/></symbol>
<symbol id="i-globe" viewBox="0 0 16 16"><circle cx="8" cy="8" r="7" fill="#bbb" stroke="#666"/><path d="M1 8H15M8 1C4 5 4 11 8 15M8 1C12 5 12 11 8 15M2 4.5H14M2 11.5H14" stroke="#666" fill="none" stroke-width=".8"/></symbol>
<symbol id="i-msg" viewBox="0 0 16 16"><path d="M8 1C12 1 15 3.5 15 7S12 13 9.5 13L12 15.5 6.5 13C3 12.5 1 10 1 7 1 3.5 4 1 8 1Z" fill="#5a5a5a"/><circle cx="5" cy="7" r="1" fill="#fff"/><circle cx="8" cy="7" r="1" fill="#fff"/><circle cx="11" cy="7" r="1" fill="#fff"/></symbol>
<symbol id="i-search" viewBox="0 0 16 16"><circle cx="6.5" cy="6.5" r="4.8" fill="none" stroke="#888" stroke-width="1.4"/><path d="M10 10 14.5 14.5" stroke="#888" stroke-width="1.6"/></symbol>
<symbol id="i-abcfield" viewBox="0 0 16 10"><text x="0" y="8" class="svgt" font-size="8" font-weight="700" fill="#666">abc</text></symbol>
</defs>
</svg>

<div class="app">
  <header class="titlebar">
    <span class="title">*fb-d4g-module4-eth — QGIS</span>
    <span class="winbtns">
      <span class="wmin"></span>
      <span class="wmax"></span>
      <span class="wclose">×</span>
    </span>
  </header>

  <nav class="menubar">
    <span>Pro<u>j</u>ect</span><span><u>E</u>dit</span><span><u>V</u>iew</span><span><u>L</u>ayer</span><span><u>S</u>ettings</span><span><u>P</u>lugins</span><span>Vect<u>o</u>r</span><span><u>R</u>aster</span><span><u>D</u>atabase</span><span><u>W</u>eb</span><span><u>M</u>esh</span><span>Pro<u>c</u>essing</span><span><u>H</u>elp</span>
  </nav>

  <div class="toolbar">
    <i class="grip"></i>
    <span class="tb"><svg><use href="#i-new"/></svg></span>
    <span class="tb"><svg><use href="#i-open"/></svg></span>
    <span class="tb"><svg><use href="#i-save"/></svg></span>
    <span class="tb"><svg><use href="#i-layout"/></svg></span>
    <span class="tb"><svg><use href="#i-lmgr"/></svg></span>
    <span class="tb"><svg><use href="#i-style"/></svg></span>
    <i class="grip g2"></i>
    <span class="tb active"><svg><use href="#i-hand"/></svg></span>
    <span class="tb"><svg><use href="#i-pansel"/></svg></span>
    <span class="tb"><svg><use href="#i-zin"/></svg></span>
    <span class="tb"><svg><use href="#i-zout"/></svg></span>
    <span class="tb"><svg><use href="#i-zfull"/></svg></span>
    <span class="tb off"><svg><use href="#i-zsel"/></svg></span>
    <span class="tb"><svg><use href="#i-zsel"/></svg></span>
    <span class="tb off"><svg><use href="#i-z11"/></svg></span>
    <span class="tb"><svg><use href="#i-zlast"/></svg></span>
    <span class="tb off"><svg><use href="#i-znext"/></svg></span>
    <span class="tb"><svg><use href="#i-newmap"/></svg></span>
    <span class="tb"><svg><use href="#i-3d"/></svg></span>
    <span class="tb"><svg><use href="#i-newbk"/></svg></span>
    <span class="tb"><svg><use href="#i-bk"/></svg></span>
    <span class="tb"><svg><use href="#i-clock"/></svg></span>
    <span class="tb"><svg><use href="#i-refresh"/></svg></span>
    <i class="grip"></i>
    <span class="tb"><svg><use href="#i-ident"/></svg></span>
    <span class="tb"><svg><use href="#i-table"/></svg></span>
    <span class="tb"><svg><use href="#i-abacus"/></svg></span>
    <span class="tb"><svg><use href="#i-gear"/></svg></span>
    <span class="tb sigma">Σ</span>
    <span class="tb"><svg><use href="#i-measure"/></svg></span><b class="drop"></b>
    <span class="tb"><svg><use href="#i-tip"/></svg></span>
    <span class="tb off"><svg><use href="#i-gearg"/></svg></span><b class="drop off"></b>
    <span class="tb"><svg><use href="#i-textann"/></svg></span><b class="drop"></b>
    <i class="grip tight"></i>
    <span class="tb"><svg><use href="#i-select"/></svg></span><b class="drop"></b>
    <span class="tb"><svg><use href="#i-form"/></svg></span><b class="drop"></b>
    <span class="tb"><svg><use href="#i-desel"/></svg></span><b class="drop"></b>
    <span class="tb pinbtn"><svg><use href="#i-pin"/></svg></span>
  </div>

  <div class="toolbar second">
    <i class="grip"></i>
    <span class="tb off"><svg><use href="#i-toggle"/></svg></span>
    <span class="tb"><svg><use href="#i-pencil"/></svg></span>
    <span class="tb off"><svg><use href="#i-saveed"/></svg></span>
    <span class="tb off"><svg><use href="#i-addpts"/></svg></span>
    <span class="tb off"><svg><use href="#i-vertex"/></svg></span><b class="drop off abs"></b>
    <span class="tb off nudge"><svg><use href="#i-modify"/></svg></span>
    <span class="tb off"><svg><use href="#i-trash"/></svg></span>
    <span class="tb off"><svg><use href="#i-cut"/></svg></span>
    <span class="tb off"><svg><use href="#i-copy"/></svg></span>
    <span class="tb off"><svg><use href="#i-paste"/></svg></span>
    <span class="tb off"><svg><use href="#i-undo"/></svg></span>
    <span class="tb off"><svg><use href="#i-redo"/></svg></span>
    <i class="grip short s1"></i>
    <span class="tb"><svg><use href="#i-abc"/></svg></span>
    <span class="tb"><svg><use href="#i-chart"/></svg></span>
    <i class="sep"></i>
    <span class="tb"><svg><use href="#i-abcblue"/></svg></span>
    <span class="tb"><svg><use href="#i-abcred"/></svg></span>
    <i class="sep"></i>
    <span class="tb"><svg><use href="#i-abcpin"/></svg></span>
    <span class="tb"><svg><use href="#i-abceye"/></svg></span>
    <span class="tb"><svg><use href="#i-abcmove"/></svg></span>
    <span class="tb"><svg><use href="#i-abcrot"/></svg></span>
    <span class="tb"><svg><use href="#i-abcedit"/></svg></span>
    <i class="grip short"></i>
    <span class="tb"><svg><use href="#i-binoc"/></svg></span>
    <i class="grip short"></i>
    <span class="tb"><svg><use href="#i-python"/></svg></span>
    <span class="tb"><svg><use href="#i-earth"/></svg></span>
    <span class="tb"><svg><use href="#i-identg"/></svg></span>
    <span class="tb"><svg><use href="#i-swipe"/></svg></span>
    <i class="grip short s2"></i>
    <span class="tb"><svg><use href="#i-help"/></svg></span>
    <i class="grip short s2"></i>
    <span class="tb"><svg><use href="#i-dig"/></svg></span>
    <span class="tb"><svg><use href="#i-tabref"/></svg></span>
    <i class="grip short s1"></i>
    <span class="tb"><svg><use href="#i-gsearch"/></svg></span>
    <span class="tb"><svg><use href="#i-mapedit"/></svg></span>
    <i class="grip short"></i>
  </div>

  <main class="workspace">
    <aside class="sidebar">
      <i class="hgrip"></i>
      <div class="sbgroup first">
        <svg><use href="#i-dsm"/></svg>
        <svg><use href="#i-gpkg"/></svg>
        <svg><use href="#i-vstar"/></svg>
        <svg><use href="#i-fstar"/></svg>
        <svg><use href="#i-chip"/></svg>
        <svg class="big"><use href="#i-vboxs"/></svg>
      </div>
      <i class="hgrip"></i>
      <div class="sbgroup second-group">
        <svg><use href="#i-vplus"/></svg>
        <svg><use href="#i-rplus"/></svg>
        <svg><use href="#i-mplus"/></svg>
        <svg><use href="#i-cplus"/></svg>
        <svg><use href="#i-fplus"/></svg>
        <svg><use href="#i-vbplus"/></svg>
        <span class="sbdrop"><svg><use href="#i-pg"/></svg><b class="drop"></b></span>
        <svg><use href="#i-wms"/></svg>
        <svg><use href="#i-wcs"/></svg>
        <svg><use href="#i-wfs"/></svg>
        <span class="sbdrop"><svg><use href="#i-gpkg"/></svg><b class="drop"></b></span>
      </div>
    </aside>

    <section class="dock layers">
      <div class="docktitle"><span>Layers</span><span class="dockbtns"><svg><use href="#i-dock"/></svg><svg><use href="#i-close"/></svg></span></div>
      <div class="ltools">
        <span class="lt active"><svg><use href="#i-brush"/></svg></span>
        <span class="lt"><svg><use href="#i-group"/></svg></span>
        <span class="lt"><svg><use href="#i-eye"/></svg></span>
        <span class="lt"><svg><use href="#i-filter"/></svg></span>
        <span class="lt"><svg><use href="#i-expr"/></svg></span><b class="drop"></b>
        <span class="lt"><svg><use href="#i-expand"/></svg></span>
        <span class="lt"><svg><use href="#i-collapse"/></svg></span>
        <span class="lt"><svg><use href="#i-rmlayer"/></svg></span>
      </div>
      <div class="tree">
        <div class="tree-row selected">
          <b class="twist"></b><span class="cb checked"></span><svg class="lyr"><use href="#i-pts"/></svg>
          <span class="lname current">Allis_Ababa_clinics</span>
        </div>
        <div class="tree-row">
          <b class="twist none"></b><span class="cb checked"></span><span class="swatch"></span>
          <span class="lname">ETH_Addis_Ababa</span>
        </div>
      </div>
      <div class="tabs">
        <span class="tab on">Layers</span><span class="tab">Browser</span>
      </div>
    </section>

    <section class="map">
      <svg viewBox="424 138 962 911">
        <path class="boundary" d="M900.7 160.3 880.7 160.3 861.7 167.7 834 185.3 792.3 197.3 756 201.3 721.7 194.7 689.3 214 669 218.7 649.3 227.3 619.3 243 613.3 265 613.3 286.7 613 318.7 590 341 577.7 355 575.3 374 559.7 396.3 557.3 426.7 558.7 449.3 536.7 451.7 509.7 448.7 506.7 474.7 528.7 499 533.7 530.7 518.3 557.7 496.7 561 468.7 567.3 479.3 593.7 513.3 603.7 553.3 609.7 588.7 621 604.3 646.7 603.7 675.3 627.7 679.7 646.7 673 656.7 703 673.3 725.7 694.7 741.3 729.7 745.3 743.3 761.7 756.3 774.7 768.3 793.3 786.3 806 809.7 801.7 812.7 836 808.7 874.3 821.7 885 815.3 910 816.3 930.3 844.3 945.7 852 963.3 868.7 962 906 949.7 920.7 965.7 924 1001 931 1020 951.7 1022.3 968.3 1020.7 986.7 1028 1016.7 1014 1035.7 1006.3 1052.3 1009 1074.3 1002.3 1073 985 1073 964.7 1080.7 948.7 1083.7 930 1091 912.7 1083.3 896.7 1080.3 875 1102.7 866 1128.3 876 1150 875.3 1186.7 863.7 1204 866 1220 898.3 1223.7 872.3 1234 850 1248.3 824 1235 793.7 1247.3 770.7 1255 750.3 1235 731.7 1216.7 718.3 1194.3 704.7 1177 684.7 1196 670.3 1221.7 679.7 1265 691.7 1294.3 697.3 1311.7 688.7 1325.7 658.7 1310 630.3 1331.7 605.5 1335.5 580 1342.7 556 1338.7 535 1336.7 507.7 1342.3 490 1338.7 451 1326.7 416.7 1313.3 385 1300.3 360 1276.7 328.3 1267 312 1266.7 283.3 1263.3 257.3 1244.7 215 1218.3 204 1180.7 208.7 1157.3 226 1134 224.7 1076 233.7 1040 220.7 1011.7 212.3 994.3 224.7 966 227.7 923.3 175Z"/>
        <g class="pts">
          <circle cx="731" cy="299"/><circle cx="732" cy="300"/><circle cx="647" cy="262"/><circle cx="721" cy="313"/><circle cx="763" cy="331"/><circle cx="776" cy="335"/><circle cx="777" cy="334.7"/><circle cx="791" cy="323"/><circle cx="835" cy="359"/><circle cx="887" cy="361"/><circle cx="891" cy="368"/><circle cx="885" cy="379"/><circle cx="837" cy="390"/><circle cx="855" cy="395"/><circle cx="849" cy="397"/><circle cx="778" cy="415"/><circle cx="827" cy="414"/><circle cx="854" cy="423"/><circle cx="833" cy="437"/><circle cx="804" cy="449"/><circle cx="887" cy="444"/><circle cx="923" cy="444"/><circle cx="877" cy="456"/><circle cx="799" cy="478"/><circle cx="903" cy="483"/><circle cx="930" cy="477"/><circle cx="934" cy="480"/><circle cx="870" cy="488"/><circle cx="870" cy="489"/><circle cx="861" cy="498"/><circle cx="863" cy="499"/><circle cx="601" cy="488"/><circle cx="725" cy="498"/><circle cx="840" cy="511"/><circle cx="863" cy="518"/><circle cx="918" cy="521"/><circle cx="916" cy="523"/><circle cx="883" cy="534"/><circle cx="921" cy="535"/><circle cx="638" cy="542"/><circle cx="779" cy="545"/><circle cx="831" cy="576"/><circle cx="880" cy="629"/><circle cx="865" cy="640"/><circle cx="726" cy="646"/><circle cx="800" cy="657"/><circle cx="826" cy="658"/><circle cx="961" cy="637"/><circle cx="987" cy="403"/><circle cx="942" cy="452"/><circle cx="955" cy="445"/><circle cx="961" cy="464"/><circle cx="1046" cy="471"/><circle cx="1041" cy="490"/><circle cx="1028" cy="499"/><circle cx="943" cy="511"/><circle cx="938" cy="517"/><circle cx="945" cy="517"/><circle cx="945" cy="528"/><circle cx="957" cy="537"/><circle cx="1165" cy="436"/><circle cx="1191" cy="416"/><circle cx="1252" cy="401"/><circle cx="1162" cy="448"/><circle cx="1158" cy="452"/><circle cx="1195" cy="490"/><circle cx="1176" cy="503"/><circle cx="1188" cy="508"/>
        </g>
      </svg>
    </section>

    <section class="dock styling">
      <div class="docktitle"><span>Layer Styling</span><span class="dockbtns"><svg><use href="#i-dock"/></svg><svg><use href="#i-close"/></svg></span></div>
      <div class="combo lcombo"><svg class="ci"><use href="#i-ptsd"/></svg>Allis_Ababa_clinics</div>
      <div class="rendrow">
        <svg class="paint"><use href="#i-brush"/></svg>
        <div class="combo grow"><svg class="ci"><use href="#i-cat"/></svg>Categorized</div>
      </div>
      <div class="stylebody">
        <div class="stylenav">
          <svg><use href="#i-abc"/></svg>
          <svg><use href="#i-abcb"/></svg>
          <svg><use href="#i-cube"/></svg>
          <svg><use href="#i-diagram"/></svg>
          <svg><use href="#i-history"/></svg>
        </div>
        <div class="stylemain">
          <div class="form">
            <label>Value</label>
            <div class="valrow">
              <div class="field"><svg class="fi"><use href="#i-abcfield"/></svg>amenity<b class="fdrop"></b></div>
              <span class="btn eps">ε</span>
            </div>
            <label>Symbol</label>
            <div class="btnrow symh"><span class="btn wide"><i class="sym other"></i></span><span class="btn menu"></span></div>
            <label>Color ramp</label>
            <div class="btnrow ramph"><span class="btn wide">Random colors</span><span class="btn menu"></span></div>
          </div>
          <div class="cattable">
            <div class="thead">
              <span class="c1">Symbol</span><span class="c2">Value</span><span class="c3">Legend<b class="sort"></b></span>
            </div>
            <div class="trow selected">
              <span class="c1 plain"><i class="cb checked"></i><i class="sym main"></i></span><span class="c2 plain">clinic</span><span class="c3 plain">clinic</span>
            </div>
            <div class="trow">
              <span class="c1 plain"><i class="cb checked"></i><i class="sym other"></i></span><span class="c2 plain muted">all othe…</span><span class="c3 plain"></span>
            </div>
          </div>
          <div class="actions">
            <span class="btn classify">Classify</span>
            <span class="btn ico"><svg><use href="#i-plus-o"/></svg></span>
            <span class="btn ico"><svg><use href="#i-minus-o"/></svg></span>
            <span class="btn delall">Delete All</span>
            <span class="spacer"></span>
            <span class="btn adv">Advanced<b class="advdrop"></b></span>
          </div>
          <div class="rendering"><b class="rarrow"></b><strong>Layer Rendering</strong></div>
          <div class="applyrow">
            <span class="btn ico small"><svg><use href="#i-undoc"/></svg></span>
            <span class="btn ico small"><svg><use href="#i-redoc"/></svg></span>
            <span class="spacer"></span>
            <span class="cb checked"></span><span class="live">Live update</span>
            <span class="btn apply"><svg><use href="#i-check"/></svg>Apply</span>
          </div>
        </div>
      </div>
      <div class="tabs">
        <span class="tab on">Layer Styling</span><span class="tab">Processing Toolbox</span><span class="tab">Value Tool</span>
      </div>
    </section>
  </main>

  <footer class="statusbar">
    <div class="locator"><svg><use href="#i-search"/></svg>Type to locate (Ctrl+K)</div>
    <span class="stmsg">1 legend entries removed.</span>
    <span class="spacer"></span>
    <span class="stl">Coordinate</span>
    <span class="stbox coord">38.7702,8.9312</span>
    <svg class="nomap"><use href="#i-nomap"/></svg>
    <span class="stl scale">Scale</span>
    <span class="stbox scalebox">1:114854<b class="fdrop"></b></span>
    <svg class="lock"><use href="#i-lock"/></svg>
    <span class="stl mag">Magnifier</span>
    <span class="stbox spin magbox">100%<b class="updown"></b></span>
    <span class="stl rot">Rotation</span>
    <span class="stbox spin rotbox">0.0 °<b class="updown"></b></span>
    <span class="cb checked rcb"></span>
    <span class="stl render">Render</span>
    <svg class="sglobe"><use href="#i-globe"/></svg>
    <span class="stl epsg">EPSG:4326</span>
    <svg class="msg"><use href="#i-msg"/></svg>
  </footer>
</div>
</body>
</html>
```
FILE: styles.css
```css
* { box-sizing: border-box; }
html, body { margin: 0; padding: 0; }
body { width: 1922px; height: 1082px; overflow: hidden; background: #efefef; font-family: "DejaVu Sans", sans-serif; font-size: 13px; color: #1c1c1c; }
.sprite { position: absolute; width: 0; height: 0; }
.svgt { font-family: "Liberation Sans", sans-serif; }
.svgs { font-family: "DejaVu Sans", sans-serif; }
.svgr { font-family: "Liberation Serif", serif; }

.app { width: 1922px; height: 1082px; display: flex; flex-direction: column; border: 1px solid #8f8f8f; border-top-color: #999; background: #efefef; }

.titlebar { height: 36px; flex: none; background: #333; color: #e6e6e6; position: relative; display: flex; align-items: center; justify-content: center; font-family: "Noto Sans", sans-serif; font-size: 13.2px; font-weight: 600; }
.title { position: relative; }
.winbtns { position: absolute; inset: 0; }
.wmin { position: absolute; left: 1831px; top: 18px; width: 8px; height: 2px; background: #ddd; }
.wmax { position: absolute; left: 1865px; top: 15px; width: 7px; height: 7px; border: 1px solid #ddd; }
.wclose { position: absolute; left: 1893px; top: 9px; width: 18px; height: 18px; border-radius: 50%; background: #e95420; color: #fff; font-size: 17px; line-height: 17px; text-align: center; font-weight: 400; }

.menubar { height: 22px; flex: none; display: flex; align-items: center; padding-left: 2.5px; background: #f2f2f2; font-size: 13px; color: #222; }
.menubar span { padding: 0 7.55px; }
.menubar u { text-decoration-thickness: 1px; text-underline-offset: 2px; text-decoration-skip-ink: none; }

.toolbar { height: 39px; flex: none; display: flex; align-items: center; border-top: 1px solid #dcdcdc; border-bottom: 1px solid #b9b9b9; background: linear-gradient(#f7f7f7, #f1f1f1); padding-left: 0; position: relative; }
.toolbar.second { height: 39px; }
.grip { flex: none; width: 17px; height: 22px; background-image: radial-gradient(circle, #b5b5b5 .7px, transparent .9px); background-size: 3px 3px; background-repeat: repeat; background-position: center; background-clip: content-box; padding: 0 6px; }
.grip.g2 { width: 15.5px; padding: 0 5.25px; }
.grip.tight { width: 20px; padding: 0 8px; }
.grip.short { width: 17px; }
.grip.s1 { width: 15px; padding: 0 5px; }
.grip.s2 { width: 16px; padding: 0 5.5px; }
.toolbar > .grip:first-child { width: 12.5px; padding: 0 3.5px; }
.toolbar.second > .grip:first-child { width: 11px; padding: 0 3px; }
.tb { flex: none; width: 33px; height: 31px; display: flex; align-items: center; justify-content: center; border: 1px solid transparent; border-radius: 3px; color: #a01590; }
.tb svg { width: 24px; height: 24px; display: block; }
.tb.pinbtn { margin-left: 4px; }
.tb.active { background: #dcdcdc; border-color: #b0b0b0; }
.tb.active svg { margin-left: 2px; }
.tb.off { opacity: .42; filter: grayscale(1); }
.tb.nudge { margin-left: 12px; }
.tb.sigma { font-size: 27px; font-weight: 700; line-height: 1; font-family: "DejaVu Sans", sans-serif; }
.drop { flex: none; width: 11px; height: 6px; position: relative; }
.drop::after { content: ""; position: absolute; left: 1px; top: 0; border-left: 4px solid transparent; border-right: 4px solid transparent; border-top: 5px solid #555; }
.drop.off { opacity: .35; }
.drop.abs { width: 0; }
.sep { flex: none; width: 1px; height: 26px; background: #cfcfcf; margin: 0 3px; }

.workspace { flex: 1; min-height: 0; display: flex; }

.sidebar { flex: none; width: 52px; border-right: 1px solid #bdbdbd; background: linear-gradient(90deg, #ececec, #f8f8f8); display: flex; flex-direction: column; align-items: flex-start; position: relative; }
.hgrip { flex: none; display: block; width: 22px; height: 6px; margin: 3px 0 3px 16px; background-image: radial-gradient(circle, #b5b5b5 .7px, transparent .9px); background-size: 3px 3px; }
.sbgroup { display: flex; flex-direction: column; padding-left: 8px; gap: 8.2px; }
.sbgroup svg { width: 24px; height: 24px; display: block; flex: none; }
.sbgroup.first { padding-left: 15px; gap: 8px; margin-top: 5px; height: 207px; }
.sbgroup.first .big { margin-top: 6px; }
.second-group { margin-top: 2px; }
.sbdrop { position: relative; display: block; width: 24px; height: 24px; }
.sbdrop .drop { position: absolute; left: 29px; top: 11px; width: 10px; }

.dock { flex: none; display: flex; flex-direction: column; }
.dock.layers { width: 366px; padding-right: 2px; margin-right: 5px; }
.dock.styling { flex: 1; width: auto; margin-left: 6px; padding: 0 3px 0 3px; min-width: 0; }
.docktitle { height: 20px; flex: none; display: flex; align-items: center; justify-content: space-between; padding: 0 0 0 4px; font-size: 13px; color: #222; margin-top: 0; }
.layers .docktitle { padding-left: 4px; }
.styling .docktitle { padding-left: 2px; }
.dockbtns { display: flex; gap: 3px; }
.dockbtns svg { width: 11px; height: 11px; display: block; }
.ltools { height: 30px; flex: none; display: flex; align-items: center; padding-left: 4px; }
.lt { flex: none; width: 25px; height: 21px; display: flex; align-items: center; justify-content: center; border: 1px solid transparent; border-radius: 3px; }
.lt svg { width: 17px; height: 17px; display: block; }
.lt.active { background: #dcdcdc; border-color: #b8b8b8; width: 24px; margin-right: 1px; }
.ltools .drop { width: 12px; margin-left: -5px; margin-right: 5px; }
.tree { flex: 1; min-height: 0; background: #fff; border: 1px solid #bdbdbd; border-bottom-color: #aaa; }
.tree-row { height: 20px; display: flex; align-items: center; position: relative; color: #000; padding-bottom: 2px; }
.tree-row.selected { background: #308cc6; color: #fff; padding-bottom: 0; }
.twist { flex: none; width: 0; height: 0; margin-left: 9px; border-left: 5px solid #333; border-top: 4px solid transparent; border-bottom: 4px solid transparent; margin-right: 9px; }
.twist.none { border-left-color: transparent; }
.selected .twist { border-left-color: #1b3a52; }
.cb { flex: none; display: inline-block; width: 14px; height: 14px; background: #fff; border: 1px solid #aaa; border-radius: 1px; position: relative; }
.cb.checked::after { content: ""; position: absolute; left: 4px; top: 1px; width: 5px; height: 8.5px; border: solid #000; border-width: 0 2px 2px 0; transform: rotate(38deg); }
.lyr { flex: none; width: 14px; height: 14px; margin: 0 6px 0 8px; }
.swatch { flex: none; width: 16px; height: 15px; background: #fff; border: 1px solid #888; margin: 0 6px 0 6px; }
.lname { font-weight: 700; font-size: 13px; }
.lname.current { text-decoration: underline; text-decoration-skip-ink: none; }

.tabs { height: 27px; flex: none; display: flex; align-items: flex-start; padding-left: 1px; position: relative; top: -1px; }
.tab { height: 25px; padding: 3px 12px 0; display: flex; align-items: center; justify-content: center; background: #dcdcdc; border: 1px solid #bbb; border-radius: 0 0 3px 3px; margin-left: -1px; color: #222; font-size: 13.33px; }
.tab.on { height: 27px; background: linear-gradient(#f4f4f4, #fdfdfd); padding: 4px 11px 0; z-index: 1; margin-left: 0; font-size: 13px; }

.map { flex: none; width: 962px; background: #fff; position: relative; }
.map::before, .map::after { content: ""; position: absolute; top: 448px; width: 3px; height: 20px; background-image: radial-gradient(circle, #b5b5b5 .7px, transparent .9px); background-size: 3px 3px; }
.map::before { left: -5px; }
.map::after { right: -5px; }
.map svg { display: block; width: 962px; height: 100%; outline: 1px solid #b4b4b4; outline-offset: -1px; }
.boundary { fill: none; stroke: #111; stroke-width: .8; stroke-linejoin: bevel; }
.pts circle { r: 4.1px; fill: #1f78b4; stroke: #232323; stroke-width: .7; }

.combo { height: 23px; flex: none; display: flex; align-items: center; border: 1px solid #bcbcbc; border-radius: 3px; background: linear-gradient(#fafafa, #ececec); padding-left: 6px; position: relative; color: #222; }
.combo::after { content: ""; position: absolute; right: 7px; top: 9px; border-left: 4px solid transparent; border-right: 4px solid transparent; border-top: 5px solid #555; }
.ci { width: 14px; height: 14px; margin-right: 4px; flex: none; }
.lcombo { margin: 4px 0 0 1px; }
.rendrow { display: flex; align-items: center; margin-top: 8px; height: 23px; padding-left: 1px; }
.paint { width: 23px; height: 23px; margin: 0 11px 0 7px; flex: none; filter: saturate(.7); }
.grow { flex: 1; }
.stylebody { flex: 1; min-height: 0; display: flex; margin-top: 8px; padding-left: 1px; }
.stylenav { flex: none; width: 38px; background: #5a5a5a; display: flex; flex-direction: column; align-items: center; padding: 5px 5px 0 0; gap: 7.5px; }
.stylenav svg { width: 24px; height: 24px; flex: none; display: block; }
.stylemain { flex: 1; min-width: 0; display: flex; flex-direction: column; padding-left: 3px; }
.form { display: grid; grid-template-columns: 79px 1fr; row-gap: 7px; align-items: center; }
.form label { color: #222; }
.valrow { display: flex; gap: 7px; height: 23px; }
.field { flex: 1; background: #fff; border: 1px solid #bcbcbc; border-radius: 3px; display: flex; align-items: center; padding-left: 4px; position: relative; }
.fi { width: 16px; height: 10px; margin-right: 3px; flex: none; }
.fdrop { position: absolute; right: 0; top: 0; bottom: 0; width: 20px; border-left: 1px solid #d0d0d0; background: #f4f4f4; border-radius: 0 3px 3px 0; }
.fdrop::after { content: ""; position: absolute; left: 6px; top: 9px; border-left: 4px solid transparent; border-right: 4px solid transparent; border-top: 5px solid #555; }
.btn { display: inline-flex; align-items: center; justify-content: center; border: 1px solid #bcbcbc; border-radius: 3px; background: linear-gradient(#fafafa, #ececec); color: #222; flex: none; }
.eps { width: 24px; color: #6e2b87; font-size: 17px; }
.btnrow { display: flex; gap: 1px; }
.symh { height: 22px; }
.ramph { height: 26px; }
.btn.wide { flex: 1; }
.btn.menu { width: 11px; position: relative; border-radius: 2px; }
.btn.menu::after { content: ""; position: absolute; left: 1px; top: 8px; border-left: 4px solid transparent; border-right: 4px solid transparent; border-top: 5px solid #555; }
.sym { display: inline-block; width: 8px; height: 8px; border-radius: 50%; border: 1px solid #333; flex: none; }
.sym.other { background: #62dcb8; }
.sym.main { background: #1f78b4; }
.cattable { flex: 1; min-height: 0; margin-top: 9px; background: #fff; border: 1px solid #bcbcbc; }
.thead { display: flex; height: 20px; background: linear-gradient(#fafafa, #ececec); border-bottom: 1px solid #c4c4c4; }
.c1 { flex: none; width: 81px; display: flex; align-items: center; padding-left: 2px; gap: 9px; }
.c2 { flex: none; width: 69px; display: flex; align-items: center; padding-left: 3px; }
.c3 { flex: 1; display: flex; align-items: center; padding-left: 3px; position: relative; }
.thead .c1, .thead .c2 { border-right: 1px solid #d0d0d0; }
.c1.plain { padding-left: 3px; gap: 11px; }
.c2.plain { padding-left: 5px; }
.c3.plain { padding-left: 4px; }
.sort { position: absolute; right: 6px; top: 7px; border-left: 4px solid transparent; border-right: 4px solid transparent; border-bottom: 5px solid #444; }
.trow { display: flex; height: 18px; }
.trow .cb { width: 13px; height: 13px; }
.trow .cb.checked::after { left: 3.5px; top: .5px; }
.trow.selected { background: #308cc6; color: #fff; }
.trow.selected .sym { background: #2578ad; border-color: #1b4e72; }
.muted { color: #888; font-style: italic; }
.actions { flex: none; display: flex; height: 24px; margin-top: 6px; gap: 7px; align-items: stretch; }
.classify { width: 79px; }
.ico { width: 28px; }
.ico svg { width: 18px; height: 18px; display: block; }
.delall { width: 79px; }
.spacer { flex: 1; }
.adv { width: 84px; justify-content: flex-start; padding-left: 4px; position: relative; }
.advdrop { position: absolute; right: 4px; top: 9px; border-left: 3px solid transparent; border-right: 3px solid transparent; border-top: 4px solid #777; }
.rendering { flex: none; height: 20px; margin-top: 6px; display: flex; align-items: center; padding-left: 4px; color: #111; }
.rarrow { width: 0; height: 0; border-left: 7px solid #333; border-top: 6px solid transparent; border-bottom: 6px solid transparent; margin-right: 11px; }
.applyrow { flex: none; display: flex; align-items: center; height: 24px; margin-top: 5px; margin-bottom: 0; gap: 7px; }
.ico.small { width: 23px; height: 23px; }
.ico.small svg { width: 15px; height: 15px; }
.live { margin: 0 6px 0 -1px; }
.apply { width: 80px; height: 24px; gap: 1px; margin-left: 0; }
.apply svg { width: 16px; height: 18px; }
.styling .tabs { margin-top: 4px; padding-left: 0; top: 0; height: 27px; margin-left: -3px; }
.styling .tab { padding-left: 0; padding-right: 0; }
.styling .tab:nth-child(1) { width: 110px; }
.styling .tab:nth-child(2) { width: 151px; }
.styling .tab:nth-child(3) { width: 93px; }

.statusbar { height: 33px; flex: none; display: flex; align-items: center; padding: 1px 0 0 4px; border-top: 1px solid #c4c4c4; font-size: 11px; color: #333; }
.locator { flex: none; width: 270px; height: 24px; background: #fff; border: 1px solid #bcbcbc; border-radius: 3px; display: flex; align-items: center; font-size: 13px; color: #888; padding-left: 8px; }
.locator svg { width: 15px; height: 15px; margin-right: 5px; flex: none; }
.stmsg { margin-left: 8px; color: #222; }
.stl { flex: none; }
.stbox { flex: none; height: 23px; background: #fff; border: 1px solid #bcbcbc; border-radius: 3px; display: flex; align-items: center; padding-left: 4px; position: relative; color: #222; }
.coord { width: 105px; margin-left: 4px; justify-content: center; padding: 0; font-size: 10.7px; }
.nomap { width: 15px; height: 18px; margin-left: 5px; flex: none; }
.scale { margin-left: 13px; }
.scalebox { width: 97px; margin-left: 3px; }
.lock { width: 13px; height: 17px; margin-left: 13px; flex: none; }
.mag { margin-left: 9px; }
.magbox { width: 97px; margin-left: 3px; }
.rot { margin-left: 10px; }
.rotbox { width: 93px; margin-left: 9.5px; }
.updown { position: absolute; right: 0; top: 0; bottom: 0; width: 14px; border-left: 1px solid #d0d0d0; }
.updown::before { content: ""; position: absolute; left: 3px; top: 4px; border-left: 4px solid transparent; border-right: 4px solid transparent; border-bottom: 5px solid #555; }
.updown::after { content: ""; position: absolute; left: 3px; bottom: 4px; border-left: 4px solid transparent; border-right: 4px solid transparent; border-top: 5px solid #555; }
.rcb { margin-left: 7px; }
.render { margin-left: 5px; }
.sglobe { width: 16px; height: 16px; margin-left: 16px; flex: none; }
.epsg { margin-left: 2px; font-size: 11.5px; }
.msg { width: 16px; height: 16px; margin-left: 21px; margin-right: 7px; flex: none; }
```
